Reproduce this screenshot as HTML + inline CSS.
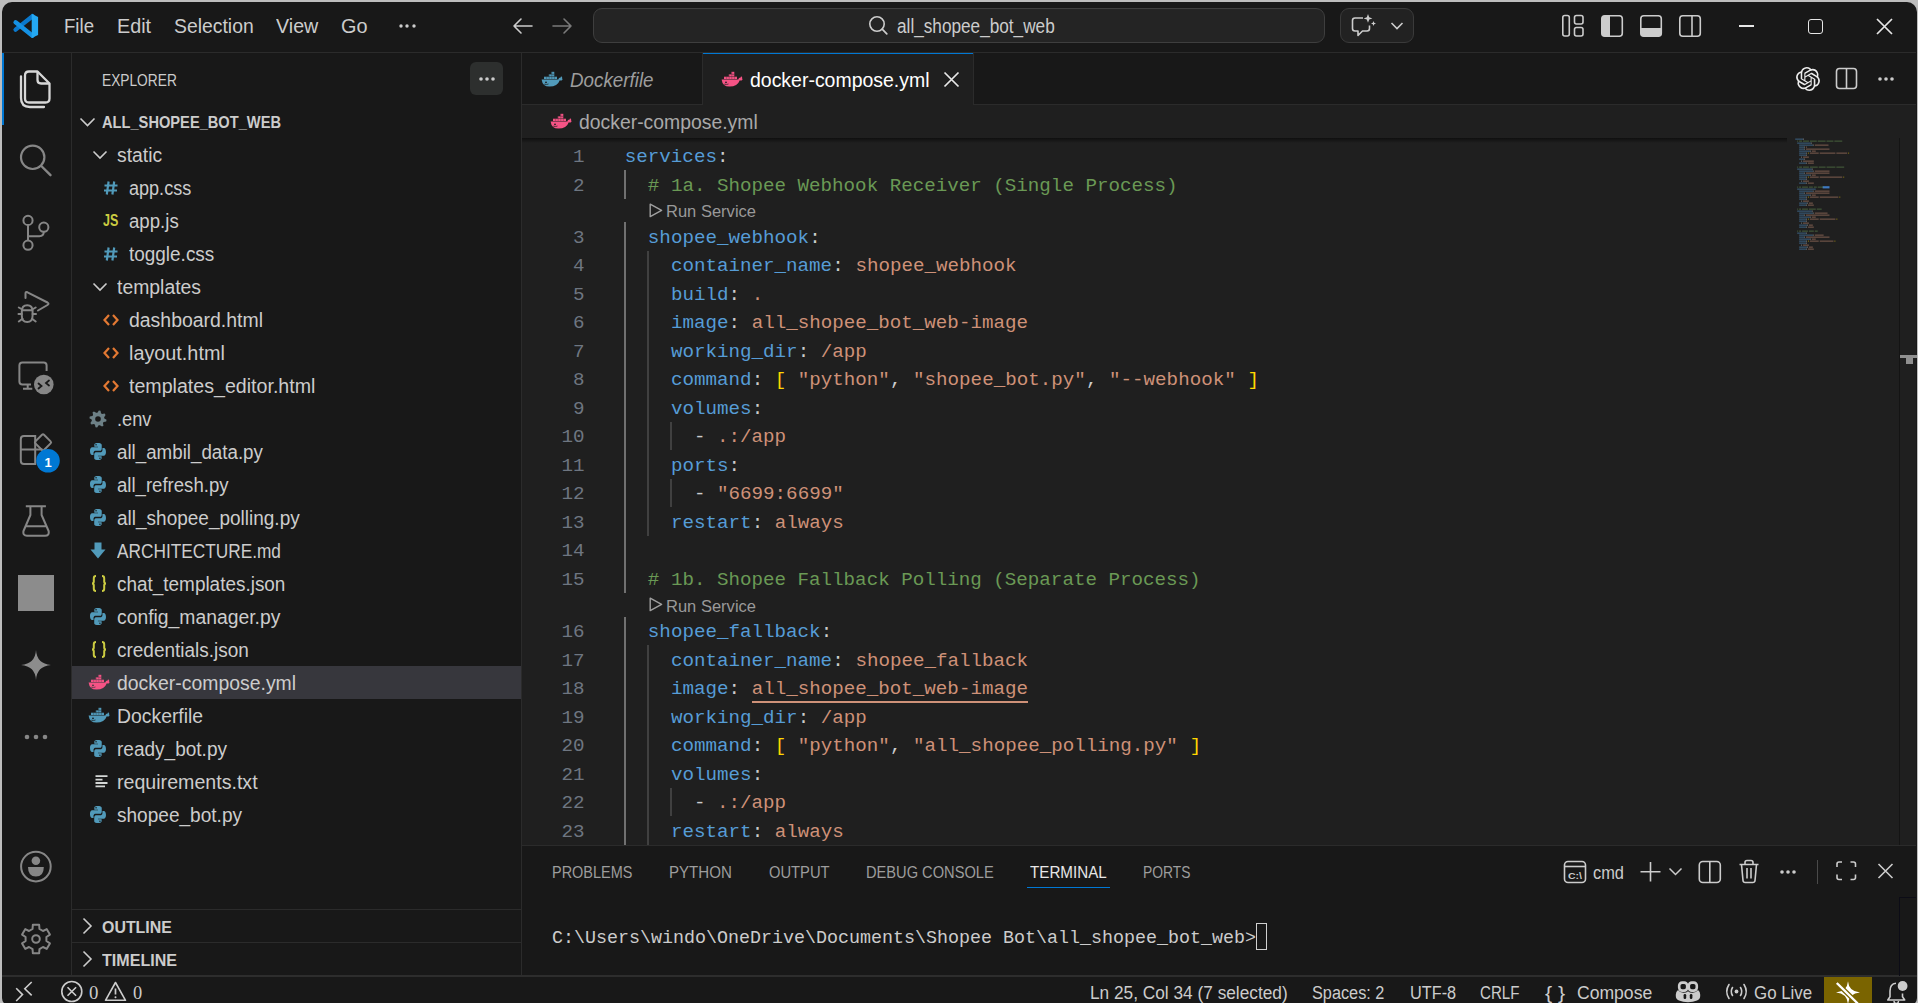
<!DOCTYPE html>
<html><head><meta charset="utf-8"><title>VS Code</title>
<style>
*{box-sizing:border-box;margin:0;padding:0}
html,body{width:1918px;height:1003px;overflow:hidden;background:#bdbdbd}
.a{position:absolute}
#win{position:absolute;left:0;top:0;width:1918px;height:1006px;background:#181818;clip-path:inset(2px 1px 0px 2px round 10px 10px 8px 8px);overflow:hidden}
.t{position:absolute;white-space:pre;line-height:1;transform-origin:0 0}
svg.a{overflow:visible}
</style></head><body><div id="win">
<div class="a" style="left:2px;top:52px;width:1914px;height:1px;background:#2b2b2b;"></div>
<div class="a" style="left:522px;top:105px;width:1394px;height:740px;background:#1f1f1f;"></div>
<div class="a" style="left:71px;top:53px;width:1px;height:923px;background:#2b2b2b;"></div>
<div class="a" style="left:521px;top:53px;width:1px;height:923px;background:#2b2b2b;"></div>
<div class="a" style="left:522px;top:104px;width:1394px;height:1px;background:#2b2b2b;"></div>
<div class="a" style="left:522px;top:845px;width:1394px;height:1px;background:#2b2b2b;"></div>
<div class="a" style="left:2px;top:975px;width:1915px;height:2px;background:#2d2d2d;"></div>
<div class="a" style="left:72px;top:909px;width:449px;height:1px;background:#2b2b2b;"></div>
<div class="a" style="left:72px;top:942px;width:449px;height:1px;background:#2b2b2b;"></div>
<svg class="a" style="left:13px;top:13px" width="26" height="26" viewBox="0 0 26 26" >
<path d="M19.5 3.2 L2.6 16.6" stroke="#0a78cc" stroke-width="4.4" stroke-linecap="round"/>
<path d="M2.6 9.3 L19.5 22.7" stroke="#1591e4" stroke-width="4.4" stroke-linecap="round"/>
<path d="M18.7 0.8 L25.1 3.9 V22 L18.7 25.1 Z" fill="#24a8f2"/>
</svg>
<div class="t" style="left:63.7px;top:17.47px;font-family:'Liberation Sans';font-size:19.5px;color:#cccccc;font-weight:400;font-style:normal;transform:scaleX(0.9548);">File</div>
<div class="t" style="left:116.9px;top:17.47px;font-family:'Liberation Sans';font-size:19.5px;color:#cccccc;font-weight:400;font-style:normal;transform:scaleX(1.0148);">Edit</div>
<div class="t" style="left:173.5px;top:17.47px;font-family:'Liberation Sans';font-size:19.5px;color:#cccccc;font-weight:400;font-style:normal;transform:scaleX(0.9935);">Selection</div>
<div class="t" style="left:276px;top:17.47px;font-family:'Liberation Sans';font-size:19.5px;color:#cccccc;font-weight:400;font-style:normal;transform:scaleX(1.0092);">View</div>
<div class="t" style="left:340.6px;top:17.47px;font-family:'Liberation Sans';font-size:19.5px;color:#cccccc;font-weight:400;font-style:normal;transform:scaleX(1.0187);">Go</div>
<svg class="a" style="left:398.5px;top:24px" width="4" height="4" viewBox="0 0 4 4" ><circle cx="2" cy="2" r="1.7" fill="#cccccc"/></svg>
<svg class="a" style="left:405px;top:24px" width="4" height="4" viewBox="0 0 4 4" ><circle cx="2" cy="2" r="1.7" fill="#cccccc"/></svg>
<svg class="a" style="left:411.5px;top:24px" width="4" height="4" viewBox="0 0 4 4" ><circle cx="2" cy="2" r="1.7" fill="#cccccc"/></svg>
<svg class="a" style="left:512px;top:17px" width="22" height="18" viewBox="0 0 22 18" ><path d="M2 9 H20 M9 2 L2 9 L9 16" stroke="#cccccc" stroke-width="1.6" fill="none" stroke-linecap="round" stroke-linejoin="round"/></svg>
<svg class="a" style="left:551px;top:17px" width="22" height="18" viewBox="0 0 22 18" ><path d="M2 9 H20 M13 2 L20 9 L13 16" stroke="#7a7a7a" stroke-width="1.6" fill="none" stroke-linecap="round" stroke-linejoin="round"/></svg>
<div class="a" style="left:593px;top:8px;width:732px;height:35px;background:#242424;border:1px solid #3e3e3e;border-radius:9px"></div>
<svg class="a" style="left:867px;top:15px" width="22" height="22" viewBox="0 0 22 22" ><circle cx="10" cy="9" r="7.2" stroke="#cccccc" stroke-width="1.6" fill="none"/><path d="M15.2 14.2 L19.8 18.8" stroke="#cccccc" stroke-width="1.7" stroke-linecap="round"/></svg>
<div class="t" style="left:896.6px;top:16.97px;font-family:'Liberation Sans';font-size:19.5px;color:#cccccc;font-weight:400;font-style:normal;transform:scaleX(0.8815);">all_shopee_bot_web</div>
<div class="a" style="left:1340px;top:8px;width:74px;height:35px;background:#222222;border:1px solid #3a3a3a;border-radius:9px"></div>
<svg class="a" style="left:1350px;top:13px" width="34" height="26" viewBox="0 0 34 26" ><path d="M13 5 H5 Q2.5 5 2.5 7.5 V15.5 Q2.5 18 5 18 H8 V22.5 L12.5 18 H17 Q19.5 18 19.5 15.5 V12.5" stroke="#cccccc" stroke-width="1.6" fill="none" stroke-linejoin="round"/>
<path d="M18 1 L19.2 4.2 L22.4 5.4 L19.2 6.6 L18 9.8 L16.8 6.6 L13.6 5.4 L16.8 4.2 Z" fill="#cccccc"/>
<path d="M23.5 8 L24.2 9.8 L26 10.5 L24.2 11.2 L23.5 13 L22.8 11.2 L21 10.5 L22.8 9.8 Z" fill="#cccccc"/></svg>
<svg class="a" style="left:1390px;top:21px" width="14" height="10" viewBox="0 0 14 10" ><path d="M1.5 2 L7 7.5 L12.5 2" stroke="#cccccc" stroke-width="1.6" fill="none"/></svg>
<svg class="a" style="left:1561px;top:14px" width="25" height="24" viewBox="0 0 25 24" ><rect x="1.8" y="1.5" width="6.5" height="20.5" rx="2" stroke="#cccccc" stroke-width="1.6" fill="none"/><rect x="13.5" y="1.5" width="8.5" height="8.5" rx="2" stroke="#cccccc" stroke-width="1.6" fill="none"/><rect x="13.5" y="13.5" width="8.5" height="8.5" rx="2" stroke="#cccccc" stroke-width="1.6" fill="none"/></svg>
<svg class="a" style="left:1600px;top:14px" width="25" height="24" viewBox="0 0 25 24" ><rect x="1.8" y="1.8" width="20.5" height="20.5" rx="3" stroke="#cccccc" stroke-width="1.6" fill="none"/><path d="M4 1.8 H10 V22.2 H4 Q1.8 22.2 1.8 20 V4 Q1.8 1.8 4 1.8Z" fill="#cccccc"/></svg>
<svg class="a" style="left:1639px;top:14px" width="25" height="24" viewBox="0 0 25 24" ><rect x="1.8" y="1.8" width="20.5" height="20.5" rx="3" stroke="#cccccc" stroke-width="1.6" fill="none"/><path d="M1.8 14 H22.2 V20 Q22.2 22.2 20 22.2 H4 Q1.8 22.2 1.8 20Z" fill="#cccccc"/></svg>
<svg class="a" style="left:1678px;top:14px" width="25" height="24" viewBox="0 0 25 24" ><rect x="1.8" y="1.8" width="20.5" height="20.5" rx="3" stroke="#cccccc" stroke-width="1.6" fill="none"/><path d="M14 1.8 V22.2" stroke="#cccccc" stroke-width="1.6"/></svg>
<div class="a" style="left:1739px;top:25.2px;width:15px;height:1.7px;background:#e6e6e6;"></div>
<div class="a" style="left:1808px;top:18.8px;width:15px;height:15px;border:1.8px solid #e6e6e6;border-radius:3px"></div>
<svg class="a" style="left:1876px;top:18px" width="17" height="17" viewBox="0 0 17 17" ><path d="M1 1 L16 16 M16 1 L1 16" stroke="#e6e6e6" stroke-width="1.7"/></svg>
<div class="a" style="left:2px;top:53px;width:1.6px;height:72px;background:#0078d4;"></div>
<svg class="a" style="left:18px;top:68px" width="36" height="42" viewBox="0 0 36 42" ><path d="M11 3.5 H19.5 L31.5 15.5 V30.5 Q31.5 34.5 27.5 34.5 H11 Q7 34.5 7 30.5 V7.5 Q7 3.5 11 3.5 Z" stroke="#d7d7d7" stroke-width="2.3" fill="none" stroke-linejoin="round"/>
<path d="M19.5 3.5 V12 Q19.5 15.5 23 15.5 H31.5" stroke="#d7d7d7" stroke-width="2.3" fill="none"/>
<path d="M3 8.5 V30 Q3 39 12 39 H26" stroke="#d7d7d7" stroke-width="2.3" fill="none" stroke-linecap="round"/></svg>
<svg class="a" style="left:14px;top:138px" width="44" height="44" viewBox="0 0 44 44" ><circle cx="18.7" cy="19.3" r="11.7" stroke="#868686" stroke-width="2.2" fill="none"/><path d="M27.3 28 L36.5 37.2" stroke="#868686" stroke-width="2.4" stroke-linecap="round"/></svg>
<svg class="a" style="left:14px;top:208px" width="44" height="44" viewBox="0 0 44 44" ><circle cx="14" cy="12.4" r="4.6" stroke="#868686" stroke-width="2" fill="none"/>
<circle cx="29.8" cy="19.2" r="4.6" stroke="#868686" stroke-width="2" fill="none"/>
<circle cx="14" cy="37.2" r="4.6" stroke="#868686" stroke-width="2" fill="none"/>
<path d="M14 17 V32.6 M29.8 23.8 Q29.8 28.2 25.4 28.2 H14" stroke="#868686" stroke-width="2" fill="none"/></svg>
<svg class="a" style="left:14px;top:284px" width="44" height="44" viewBox="0 0 44 44" ><path d="M11.5 14 V9.5 Q11.5 7.5 13.5 8.3 L33.5 18.5 Q35.5 19.8 33.5 21 L24 26.5" stroke="#868686" stroke-width="2" fill="none" stroke-linejoin="round" stroke-linecap="round"/>
<path d="M7.8 27.5 Q7.8 21.3 13.2 21.3 Q18.6 21.3 18.6 27.5 V31.5 Q18.6 38 13.2 38 Q7.8 38 7.8 31.5 Z" stroke="#868686" stroke-width="2" fill="none"/>
<path d="M4.5 30 H7.8 M18.6 30 H22 M4.8 23.5 L8.3 25.5 M21.7 23.5 L18.2 25.5 M4.8 37.5 L8.5 34.8 M21.7 37.5 L18 34.8 M8 26.3 H18.4" stroke="#868686" stroke-width="2" stroke-linecap="round"/></svg>
<svg class="a" style="left:14px;top:352px" width="44" height="44" viewBox="0 0 44 44" ><path d="M32.6 19 V13.5 Q32.6 10.5 29.6 10.5 H8.4 Q5.4 10.5 5.4 13.5 V29.5 Q5.4 32.5 8.4 32.5 H17" stroke="#868686" stroke-width="2" fill="none"/>
<path d="M9 36.8 H18.3 M13.7 33 V36.8" stroke="#868686" stroke-width="2"/>
<circle cx="29.8" cy="32.5" r="9.8" fill="#868686"/>
<path d="M24.5 31.5 L27.5 34 L24.5 36.5 M35 28.5 L32 31 L35 33.5" stroke="#181818" stroke-width="1.8" fill="none" stroke-linecap="round"/></svg>
<svg class="a" style="left:14px;top:420px" width="44" height="50" viewBox="0 0 44 50" ><path d="M10 16 H21.2 V44 H10 Q6.8 44 6.8 40.8 V19.2 Q6.8 16 10 16 Z M6.8 29.6 H21.2 M21.2 29.6 H28.5" stroke="#868686" stroke-width="2" fill="none"/>
<path d="M30 14.8 L36.6 21.4 Q37.6 22.4 36.6 23.4 L30 30 Q29 31 28 30 L21.4 23.4 Q20.4 22.4 21.4 21.4 L28 14.8 Q29 13.8 30 14.8 Z" stroke="#868686" stroke-width="2" fill="none"/>
<circle cx="34" cy="40.8" r="11.8" fill="#0078d4"/></svg>
<div class="t" style="left:44.6px;top:456.45px;font-family:'Liberation Sans';font-size:13px;color:#ffffff;font-weight:700;font-style:normal;">1</div>
<svg class="a" style="left:14px;top:498px" width="44" height="44" viewBox="0 0 44 44" ><path d="M11.8 8.3 H31.9 M16.4 8.3 V17 L9.5 33 Q8.6 37.7 13 37.7 H31 Q35.5 37.7 34.6 33 L27.6 17 V8.3 M12.2 28.3 H31.8" stroke="#868686" stroke-width="2" fill="none" stroke-linejoin="round"/></svg>
<div class="a" style="left:18px;top:575px;width:36px;height:36px;background:#8c8c8c;"></div>
<svg class="a" style="left:20px;top:649px" width="32" height="32" viewBox="0 0 32 32" ><path d="M16 1 Q16.8 14.8 31 16 Q16.8 17.2 16 31 Q15.2 17.2 1 16 Q15.2 14.8 16 1 Z" fill="#8c8c8c"/></svg>
<svg class="a" style="left:23.9px;top:734px" width="6" height="6" viewBox="0 0 6 6" ><circle cx="3" cy="3" r="2.3" fill="#868686"/></svg>
<svg class="a" style="left:33px;top:734px" width="6" height="6" viewBox="0 0 6 6" ><circle cx="3" cy="3" r="2.3" fill="#868686"/></svg>
<svg class="a" style="left:41.8px;top:734px" width="6" height="6" viewBox="0 0 6 6" ><circle cx="3" cy="3" r="2.3" fill="#868686"/></svg>
<svg class="a" style="left:14px;top:844px" width="44" height="44" viewBox="0 0 44 44" ><circle cx="21.9" cy="22.6" r="14.8" stroke="#868686" stroke-width="2" fill="none"/>
<circle cx="21.9" cy="16.8" r="4.3" fill="#868686"/>
<path d="M14 23 H29.8 Q29.8 32.6 21.9 32.6 Q14 32.6 14 23 Z" fill="#868686"/></svg>
<svg class="a" style="left:14px;top:916.6px" width="44" height="44" viewBox="0 0 44 44" ><path d="M18.55 11.98 L18.84 7.75 L25.16 7.75 L25.45 11.98 L28.95 14.00 L32.76 12.14 L35.92 17.61 L32.41 19.98 L32.41 24.02 L35.92 26.39 L32.76 31.86 L28.95 30.00 L25.45 32.02 L25.16 36.25 L18.84 36.25 L18.55 32.02 L15.05 30.00 L11.24 31.86 L8.08 26.39 L11.59 24.02 L11.59 19.98 L8.08 17.61 L11.24 12.14 L15.05 14.00 Z" stroke="#868686" stroke-width="2" fill="none" stroke-linejoin="round"/><circle cx="22" cy="22" r="3.8" stroke="#868686" stroke-width="2" fill="none"/></svg>
<div class="t" style="left:102.3px;top:72.26px;font-family:'Liberation Sans';font-size:16.5px;color:#cccccc;font-weight:400;font-style:normal;transform:scaleX(0.8324);">EXPLORER</div>
<div class="a" style="left:470px;top:62px;width:33px;height:33px;background:#2d2f2e;border-radius:6px"></div>
<svg class="a" style="left:478.5px;top:76.5px" width="4" height="4" viewBox="0 0 4 4" ><circle cx="2" cy="2" r="1.8" fill="#cccccc"/></svg>
<svg class="a" style="left:484.5px;top:76.5px" width="4" height="4" viewBox="0 0 4 4" ><circle cx="2" cy="2" r="1.8" fill="#cccccc"/></svg>
<svg class="a" style="left:490.5px;top:76.5px" width="4" height="4" viewBox="0 0 4 4" ><circle cx="2" cy="2" r="1.8" fill="#cccccc"/></svg>
<svg class="a" style="left:78px;top:114px" width="20" height="16" viewBox="0 0 20 16" ><path d="M2.5 4.5 L9.5 11.5 L16.5 4.5" stroke="#cccccc" stroke-width="1.6" fill="none"/></svg>
<div class="t" style="left:102px;top:114.06px;font-family:'Liberation Sans';font-size:16.5px;color:#cccccc;font-weight:700;font-style:normal;transform:scaleX(0.8875);">ALL_SHOPEE_BOT_WEB</div>
<div class="a" style="left:72px;top:666px;width:449px;height:33px;background:#37373d;"></div>
<div class="t" style="left:117.3px;top:146.47px;font-family:'Liberation Sans';font-size:19.5px;color:#cccccc;font-weight:400;font-style:normal;transform:scaleX(0.9909);">static</div>
<svg class="a" style="left:91px;top:146.5px" width="18" height="16" viewBox="0 0 18 16" ><path d="M2.5 4.5 L9 11 L15.5 4.5" stroke="#cccccc" stroke-width="1.6" fill="none"/></svg>
<div class="t" style="left:129.2px;top:179.47px;font-family:'Liberation Sans';font-size:19.5px;color:#cccccc;font-weight:400;font-style:normal;transform:scaleX(0.9256);">app.css</div>
<svg class="a" style="left:103px;top:179.5px" width="16" height="16" viewBox="0 0 16 16" ><path d="M5.6 1.5 L3.8 14.5 M11.2 1.5 L9.4 14.5 M1.5 5.5 H14.5 M1 10.5 H14" stroke="#519aba" stroke-width="2.2"/></svg>
<div class="t" style="left:129.2px;top:212.47px;font-family:'Liberation Sans';font-size:19.5px;color:#cccccc;font-weight:400;font-style:normal;transform:scaleX(0.9551);">app.js</div>
<div class="t" style="left:102.8px;top:212.56px;font-family:'Liberation Sans';font-size:16px;color:#cbcb41;font-weight:700;font-style:normal;transform:scaleX(0.7818);">JS</div>
<div class="t" style="left:129.2px;top:245.47px;font-family:'Liberation Sans';font-size:19.5px;color:#cccccc;font-weight:400;font-style:normal;transform:scaleX(0.9716);">toggle.css</div>
<svg class="a" style="left:103px;top:245.5px" width="16" height="16" viewBox="0 0 16 16" ><path d="M5.6 1.5 L3.8 14.5 M11.2 1.5 L9.4 14.5 M1.5 5.5 H14.5 M1 10.5 H14" stroke="#519aba" stroke-width="2.2"/></svg>
<div class="t" style="left:117.3px;top:278.47px;font-family:'Liberation Sans';font-size:19.5px;color:#cccccc;font-weight:400;font-style:normal;transform:scaleX(0.9936);">templates</div>
<svg class="a" style="left:91px;top:278.5px" width="18" height="16" viewBox="0 0 18 16" ><path d="M2.5 4.5 L9 11 L15.5 4.5" stroke="#cccccc" stroke-width="1.6" fill="none"/></svg>
<div class="t" style="left:129.2px;top:311.47px;font-family:'Liberation Sans';font-size:19.5px;color:#cccccc;font-weight:400;font-style:normal;transform:scaleX(0.9969);">dashboard.html</div>
<svg class="a" style="left:103px;top:311.5px" width="16" height="16" viewBox="0 0 16 16" ><path d="M6 3 L1.5 8 L6 13 M10 3 L14.5 8 L10 13" stroke="#e37933" stroke-width="2.2" fill="none"/></svg>
<div class="t" style="left:129.2px;top:344.47px;font-family:'Liberation Sans';font-size:19.5px;color:#cccccc;font-weight:400;font-style:normal;transform:scaleX(1.0160);">layout.html</div>
<svg class="a" style="left:103px;top:344.5px" width="16" height="16" viewBox="0 0 16 16" ><path d="M6 3 L1.5 8 L6 13 M10 3 L14.5 8 L10 13" stroke="#e37933" stroke-width="2.2" fill="none"/></svg>
<div class="t" style="left:129.2px;top:377.47px;font-family:'Liberation Sans';font-size:19.5px;color:#cccccc;font-weight:400;font-style:normal;transform:scaleX(1.0057);">templates_editor.html</div>
<svg class="a" style="left:103px;top:377.5px" width="16" height="16" viewBox="0 0 16 16" ><path d="M6 3 L1.5 8 L6 13 M10 3 L14.5 8 L10 13" stroke="#e37933" stroke-width="2.2" fill="none"/></svg>
<div class="t" style="left:117.3px;top:410.47px;font-family:'Liberation Sans';font-size:19.5px;color:#cccccc;font-weight:400;font-style:normal;transform:scaleX(0.9333);">.env</div>
<svg class="a" style="left:89.4px;top:409.5px" width="18" height="18" viewBox="0 0 18 18" ><path d="M17.56 9.86 L17.23 11.51 L14.64 12.03 L13.94 13.07 L14.44 15.66 L13.04 16.59 L10.85 15.13 L9.62 15.37 L8.14 17.56 L6.49 17.23 L5.97 14.64 L4.93 13.94 L2.34 14.44 L1.41 13.04 L2.87 10.85 L2.63 9.62 L0.44 8.14 L0.77 6.49 L3.36 5.97 L4.06 4.93 L3.56 2.34 L4.96 1.41 L7.15 2.87 L8.38 2.63 L9.86 0.44 L11.51 0.77 L12.03 3.36 L13.07 4.06 L15.66 3.56 L16.59 4.96 L15.13 7.15 L15.37 8.38 Z" fill="#6d8086"/><circle cx="9" cy="9" r="2.8" fill="#181818"/></svg>
<div class="t" style="left:117.3px;top:443.47px;font-family:'Liberation Sans';font-size:19.5px;color:#cccccc;font-weight:400;font-style:normal;transform:scaleX(0.9614);">all_ambil_data.py</div>
<svg class="a" style="left:90.4px;top:443.0px" width="16" height="17" viewBox="0 0 16 17" ><g transform="translate(-1.14,-0.69) scale(1.14,1.15)"><path d="M7.9 0.6 C4.6 0.6 4.8 2.1 4.8 2.1 V3.8 H8 V4.3 H3.3 C3.3 4.3 1 4 1 7.6 C1 11.2 3 11.1 3 11.1 H4.1 V9.4 C4.1 9.4 4 7.4 6.1 7.4 H9.4 C9.4 7.4 11.3 7.5 11.3 5.5 V2.4 C11.3 2.4 11.6 0.6 7.9 0.6 Z" fill="#519aba"/><path d="M7.9 0.6 C4.6 0.6 4.8 2.1 4.8 2.1 V3.8 H8 V4.3 H3.3 C3.3 4.3 1 4 1 7.6 C1 11.2 3 11.1 3 11.1 H4.1 V9.4 C4.1 9.4 4 7.4 6.1 7.4 H9.4 C9.4 7.4 11.3 7.5 11.3 5.5 V2.4 C11.3 2.4 11.6 0.6 7.9 0.6 Z" fill="#519aba" transform="rotate(180 8 8)"/><circle cx="6.3" cy="2.1" r="0.65" fill="#181818"/><circle cx="9.7" cy="13.9" r="0.65" fill="#181818"/></g></svg>
<div class="t" style="left:117.3px;top:476.47px;font-family:'Liberation Sans';font-size:19.5px;color:#cccccc;font-weight:400;font-style:normal;transform:scaleX(0.9525);">all_refresh.py</div>
<svg class="a" style="left:90.4px;top:476.0px" width="16" height="17" viewBox="0 0 16 17" ><g transform="translate(-1.14,-0.69) scale(1.14,1.15)"><path d="M7.9 0.6 C4.6 0.6 4.8 2.1 4.8 2.1 V3.8 H8 V4.3 H3.3 C3.3 4.3 1 4 1 7.6 C1 11.2 3 11.1 3 11.1 H4.1 V9.4 C4.1 9.4 4 7.4 6.1 7.4 H9.4 C9.4 7.4 11.3 7.5 11.3 5.5 V2.4 C11.3 2.4 11.6 0.6 7.9 0.6 Z" fill="#519aba"/><path d="M7.9 0.6 C4.6 0.6 4.8 2.1 4.8 2.1 V3.8 H8 V4.3 H3.3 C3.3 4.3 1 4 1 7.6 C1 11.2 3 11.1 3 11.1 H4.1 V9.4 C4.1 9.4 4 7.4 6.1 7.4 H9.4 C9.4 7.4 11.3 7.5 11.3 5.5 V2.4 C11.3 2.4 11.6 0.6 7.9 0.6 Z" fill="#519aba" transform="rotate(180 8 8)"/><circle cx="6.3" cy="2.1" r="0.65" fill="#181818"/><circle cx="9.7" cy="13.9" r="0.65" fill="#181818"/></g></svg>
<div class="t" style="left:117.3px;top:509.47px;font-family:'Liberation Sans';font-size:19.5px;color:#cccccc;font-weight:400;font-style:normal;transform:scaleX(0.9741);">all_shopee_polling.py</div>
<svg class="a" style="left:90.4px;top:509.0px" width="16" height="17" viewBox="0 0 16 17" ><g transform="translate(-1.14,-0.69) scale(1.14,1.15)"><path d="M7.9 0.6 C4.6 0.6 4.8 2.1 4.8 2.1 V3.8 H8 V4.3 H3.3 C3.3 4.3 1 4 1 7.6 C1 11.2 3 11.1 3 11.1 H4.1 V9.4 C4.1 9.4 4 7.4 6.1 7.4 H9.4 C9.4 7.4 11.3 7.5 11.3 5.5 V2.4 C11.3 2.4 11.6 0.6 7.9 0.6 Z" fill="#519aba"/><path d="M7.9 0.6 C4.6 0.6 4.8 2.1 4.8 2.1 V3.8 H8 V4.3 H3.3 C3.3 4.3 1 4 1 7.6 C1 11.2 3 11.1 3 11.1 H4.1 V9.4 C4.1 9.4 4 7.4 6.1 7.4 H9.4 C9.4 7.4 11.3 7.5 11.3 5.5 V2.4 C11.3 2.4 11.6 0.6 7.9 0.6 Z" fill="#519aba" transform="rotate(180 8 8)"/><circle cx="6.3" cy="2.1" r="0.65" fill="#181818"/><circle cx="9.7" cy="13.9" r="0.65" fill="#181818"/></g></svg>
<div class="t" style="left:117.3px;top:542.47px;font-family:'Liberation Sans';font-size:19.5px;color:#cccccc;font-weight:400;font-style:normal;transform:scaleX(0.8847);">ARCHITECTURE.md</div>
<svg class="a" style="left:90.4px;top:542.0px" width="16" height="17" viewBox="0 0 16 17" ><path d="M4.5 0.5 H11.5 V7.5 H15.5 L8 16.5 L0.5 7.5 H4.5 Z" fill="#519aba"/></svg>
<div class="t" style="left:117.3px;top:575.47px;font-family:'Liberation Sans';font-size:19.5px;color:#cccccc;font-weight:400;font-style:normal;transform:scaleX(0.9710);">chat_templates.json</div>
<svg class="a" style="left:90.6px;top:575.0px" width="16" height="17" viewBox="0 0 16 17" ><path d="M5 1 Q2.8 1 2.8 3.2 V6.5 Q2.8 8.5 1 8.5 Q2.8 8.5 2.8 10.5 V13.8 Q2.8 16 5 16 M11 1 Q13.2 1 13.2 3.2 V6.5 Q13.2 8.5 15 8.5 Q13.2 8.5 13.2 10.5 V13.8 Q13.2 16 11 16" stroke="#cbcb41" stroke-width="2" fill="none"/></svg>
<div class="t" style="left:117.3px;top:608.47px;font-family:'Liberation Sans';font-size:19.5px;color:#cccccc;font-weight:400;font-style:normal;transform:scaleX(0.9910);">config_manager.py</div>
<svg class="a" style="left:90.4px;top:608.0px" width="16" height="17" viewBox="0 0 16 17" ><g transform="translate(-1.14,-0.69) scale(1.14,1.15)"><path d="M7.9 0.6 C4.6 0.6 4.8 2.1 4.8 2.1 V3.8 H8 V4.3 H3.3 C3.3 4.3 1 4 1 7.6 C1 11.2 3 11.1 3 11.1 H4.1 V9.4 C4.1 9.4 4 7.4 6.1 7.4 H9.4 C9.4 7.4 11.3 7.5 11.3 5.5 V2.4 C11.3 2.4 11.6 0.6 7.9 0.6 Z" fill="#519aba"/><path d="M7.9 0.6 C4.6 0.6 4.8 2.1 4.8 2.1 V3.8 H8 V4.3 H3.3 C3.3 4.3 1 4 1 7.6 C1 11.2 3 11.1 3 11.1 H4.1 V9.4 C4.1 9.4 4 7.4 6.1 7.4 H9.4 C9.4 7.4 11.3 7.5 11.3 5.5 V2.4 C11.3 2.4 11.6 0.6 7.9 0.6 Z" fill="#519aba" transform="rotate(180 8 8)"/><circle cx="6.3" cy="2.1" r="0.65" fill="#181818"/><circle cx="9.7" cy="13.9" r="0.65" fill="#181818"/></g></svg>
<div class="t" style="left:117.3px;top:641.47px;font-family:'Liberation Sans';font-size:19.5px;color:#cccccc;font-weight:400;font-style:normal;transform:scaleX(0.9735);">credentials.json</div>
<svg class="a" style="left:90.6px;top:641.0px" width="16" height="17" viewBox="0 0 16 17" ><path d="M5 1 Q2.8 1 2.8 3.2 V6.5 Q2.8 8.5 1 8.5 Q2.8 8.5 2.8 10.5 V13.8 Q2.8 16 5 16 M11 1 Q13.2 1 13.2 3.2 V6.5 Q13.2 8.5 15 8.5 Q13.2 8.5 13.2 10.5 V13.8 Q13.2 16 11 16" stroke="#cbcb41" stroke-width="2" fill="none"/></svg>
<div class="t" style="left:117.3px;top:674.47px;font-family:'Liberation Sans';font-size:19.5px;color:#cccccc;font-weight:400;font-style:normal;transform:scaleX(0.9956);">docker-compose.yml</div>
<svg class="a" style="left:88px;top:675.5px" width="22" height="14" viewBox="0 0 22 14" ><path d="M0.6 6.4 H17.3 Q17.8 4.3 19.8 4.6 Q19.5 3.6 20.3 3.2 Q21.6 4.5 21.2 5.8 Q22 6.6 21 7.2 Q19.9 7.6 18.8 7.2 Q16.5 13.6 8.5 13.6 Q1.5 13.6 0.6 6.4 Z" fill="#f55385"/>
<rect x="3" y="3.6" width="13" height="2.4" fill="#f55385"/><rect x="7.8" y="1.2" width="5.6" height="2.4" fill="#f55385"/><rect x="10.4" y="-1.2" width="2.9" height="2.4" fill="#f55385"/>
<path d="M5.6 3.6 V6 M8.2 1.2 V6 M10.8 -1.2 V6 M13.4 1.2 V6 M3 3.6 H16 M7.8 1.2 H13.4" stroke="#37373d" stroke-width="0.5" opacity="0.55"/>
<circle cx="5" cy="9.3" r="0.9" fill="#37373d"/><path d="M3.2 11.2 Q5.5 12 7.5 11" stroke="#37373d" stroke-width="0.7" fill="none"/></svg>
<div class="t" style="left:117.3px;top:707.47px;font-family:'Liberation Sans';font-size:19.5px;color:#cccccc;font-weight:400;font-style:normal;transform:scaleX(0.9932);">Dockerfile</div>
<svg class="a" style="left:88px;top:708.5px" width="22" height="14" viewBox="0 0 22 14" ><path d="M0.6 6.4 H17.3 Q17.8 4.3 19.8 4.6 Q19.5 3.6 20.3 3.2 Q21.6 4.5 21.2 5.8 Q22 6.6 21 7.2 Q19.9 7.6 18.8 7.2 Q16.5 13.6 8.5 13.6 Q1.5 13.6 0.6 6.4 Z" fill="#519aba"/>
<rect x="3" y="3.6" width="13" height="2.4" fill="#519aba"/><rect x="7.8" y="1.2" width="5.6" height="2.4" fill="#519aba"/><rect x="10.4" y="-1.2" width="2.9" height="2.4" fill="#519aba"/>
<path d="M5.6 3.6 V6 M8.2 1.2 V6 M10.8 -1.2 V6 M13.4 1.2 V6 M3 3.6 H16 M7.8 1.2 H13.4" stroke="#181818" stroke-width="0.5" opacity="0.55"/>
<circle cx="5" cy="9.3" r="0.9" fill="#181818"/><path d="M3.2 11.2 Q5.5 12 7.5 11" stroke="#181818" stroke-width="0.7" fill="none"/></svg>
<div class="t" style="left:117.3px;top:740.47px;font-family:'Liberation Sans';font-size:19.5px;color:#cccccc;font-weight:400;font-style:normal;transform:scaleX(0.9757);">ready_bot.py</div>
<svg class="a" style="left:90.4px;top:740.0px" width="16" height="17" viewBox="0 0 16 17" ><g transform="translate(-1.14,-0.69) scale(1.14,1.15)"><path d="M7.9 0.6 C4.6 0.6 4.8 2.1 4.8 2.1 V3.8 H8 V4.3 H3.3 C3.3 4.3 1 4 1 7.6 C1 11.2 3 11.1 3 11.1 H4.1 V9.4 C4.1 9.4 4 7.4 6.1 7.4 H9.4 C9.4 7.4 11.3 7.5 11.3 5.5 V2.4 C11.3 2.4 11.6 0.6 7.9 0.6 Z" fill="#519aba"/><path d="M7.9 0.6 C4.6 0.6 4.8 2.1 4.8 2.1 V3.8 H8 V4.3 H3.3 C3.3 4.3 1 4 1 7.6 C1 11.2 3 11.1 3 11.1 H4.1 V9.4 C4.1 9.4 4 7.4 6.1 7.4 H9.4 C9.4 7.4 11.3 7.5 11.3 5.5 V2.4 C11.3 2.4 11.6 0.6 7.9 0.6 Z" fill="#519aba" transform="rotate(180 8 8)"/><circle cx="6.3" cy="2.1" r="0.65" fill="#181818"/><circle cx="9.7" cy="13.9" r="0.65" fill="#181818"/></g></svg>
<div class="t" style="left:117.3px;top:773.47px;font-family:'Liberation Sans';font-size:19.5px;color:#cccccc;font-weight:400;font-style:normal;transform:scaleX(1.0057);">requirements.txt</div>
<svg class="a" style="left:95px;top:774.5px" width="14" height="14" viewBox="0 0 14 14" ><path d="M0.5 1.2 H12.5 M0.5 4.6 H7.5 M0.5 8 H12.5 M0.5 11.4 H10" stroke="#d4d7d6" stroke-width="1.8"/></svg>
<div class="t" style="left:117.3px;top:806.47px;font-family:'Liberation Sans';font-size:19.5px;color:#cccccc;font-weight:400;font-style:normal;transform:scaleX(0.9770);">shopee_bot.py</div>
<svg class="a" style="left:90.4px;top:806.0px" width="16" height="17" viewBox="0 0 16 17" ><g transform="translate(-1.14,-0.69) scale(1.14,1.15)"><path d="M7.9 0.6 C4.6 0.6 4.8 2.1 4.8 2.1 V3.8 H8 V4.3 H3.3 C3.3 4.3 1 4 1 7.6 C1 11.2 3 11.1 3 11.1 H4.1 V9.4 C4.1 9.4 4 7.4 6.1 7.4 H9.4 C9.4 7.4 11.3 7.5 11.3 5.5 V2.4 C11.3 2.4 11.6 0.6 7.9 0.6 Z" fill="#519aba"/><path d="M7.9 0.6 C4.6 0.6 4.8 2.1 4.8 2.1 V3.8 H8 V4.3 H3.3 C3.3 4.3 1 4 1 7.6 C1 11.2 3 11.1 3 11.1 H4.1 V9.4 C4.1 9.4 4 7.4 6.1 7.4 H9.4 C9.4 7.4 11.3 7.5 11.3 5.5 V2.4 C11.3 2.4 11.6 0.6 7.9 0.6 Z" fill="#519aba" transform="rotate(180 8 8)"/><circle cx="6.3" cy="2.1" r="0.65" fill="#181818"/><circle cx="9.7" cy="13.9" r="0.65" fill="#181818"/></g></svg>
<svg class="a" style="left:80px;top:917px" width="14" height="18" viewBox="0 0 14 18" ><path d="M3.5 1.5 L11 9 L3.5 16.5" stroke="#cccccc" stroke-width="1.6" fill="none"/></svg>
<div class="t" style="left:102.1px;top:919.36px;font-family:'Liberation Sans';font-size:16.5px;color:#cccccc;font-weight:700;font-style:normal;transform:scaleX(0.9653);">OUTLINE</div>
<svg class="a" style="left:80px;top:950px" width="14" height="18" viewBox="0 0 14 18" ><path d="M3.5 1.5 L11 9 L3.5 16.5" stroke="#cccccc" stroke-width="1.6" fill="none"/></svg>
<div class="t" style="left:102.1px;top:952.26px;font-family:'Liberation Sans';font-size:16.5px;color:#cccccc;font-weight:700;font-style:normal;transform:scaleX(0.9741);">TIMELINE</div>
<div class="a" style="left:703px;top:53px;width:270px;height:52px;background:#1f1f1f;"></div>
<div class="a" style="left:703px;top:53px;width:270px;height:1px;background:#0078d4;"></div>
<div class="a" style="left:702px;top:53px;width:1px;height:51px;background:#2b2b2b;"></div>
<div class="a" style="left:973px;top:53px;width:1px;height:51px;background:#2b2b2b;"></div>
<svg class="a" style="left:540.6px;top:73px" width="22" height="14" viewBox="0 0 22 14" ><path d="M0.6 6.4 H17.3 Q17.8 4.3 19.8 4.6 Q19.5 3.6 20.3 3.2 Q21.6 4.5 21.2 5.8 Q22 6.6 21 7.2 Q19.9 7.6 18.8 7.2 Q16.5 13.6 8.5 13.6 Q1.5 13.6 0.6 6.4 Z" fill="#519aba"/>
<rect x="3" y="3.6" width="13" height="2.4" fill="#519aba"/><rect x="7.8" y="1.2" width="5.6" height="2.4" fill="#519aba"/><rect x="10.4" y="-1.2" width="2.9" height="2.4" fill="#519aba"/>
<path d="M5.6 3.6 V6 M8.2 1.2 V6 M10.8 -1.2 V6 M13.4 1.2 V6 M3 3.6 H16 M7.8 1.2 H13.4" stroke="#181818" stroke-width="0.5" opacity="0.55"/>
<circle cx="5" cy="9.3" r="0.9" fill="#181818"/><path d="M3.2 11.2 Q5.5 12 7.5 11" stroke="#181818" stroke-width="0.7" fill="none"/></svg>
<div class="t" style="left:570.4px;top:71.17px;font-family:'Liberation Sans';font-size:19.5px;color:#9d9d9d;font-weight:400;font-style:italic;transform:scaleX(0.9632);">Dockerfile</div>
<svg class="a" style="left:721px;top:73px" width="22" height="14" viewBox="0 0 22 14" ><path d="M0.6 6.4 H17.3 Q17.8 4.3 19.8 4.6 Q19.5 3.6 20.3 3.2 Q21.6 4.5 21.2 5.8 Q22 6.6 21 7.2 Q19.9 7.6 18.8 7.2 Q16.5 13.6 8.5 13.6 Q1.5 13.6 0.6 6.4 Z" fill="#f55385"/>
<rect x="3" y="3.6" width="13" height="2.4" fill="#f55385"/><rect x="7.8" y="1.2" width="5.6" height="2.4" fill="#f55385"/><rect x="10.4" y="-1.2" width="2.9" height="2.4" fill="#f55385"/>
<path d="M5.6 3.6 V6 M8.2 1.2 V6 M10.8 -1.2 V6 M13.4 1.2 V6 M3 3.6 H16 M7.8 1.2 H13.4" stroke="#1f1f1f" stroke-width="0.5" opacity="0.55"/>
<circle cx="5" cy="9.3" r="0.9" fill="#1f1f1f"/><path d="M3.2 11.2 Q5.5 12 7.5 11" stroke="#1f1f1f" stroke-width="0.7" fill="none"/></svg>
<div class="t" style="left:750.1px;top:71.17px;font-family:'Liberation Sans';font-size:19.5px;color:#ffffff;font-weight:400;font-style:normal;transform:scaleX(0.9978);">docker-compose.yml</div>
<svg class="a" style="left:943px;top:71px" width="17" height="17" viewBox="0 0 17 17" ><path d="M1.5 1.5 L15.5 15.5 M15.5 1.5 L1.5 15.5" stroke="#e8e8e8" stroke-width="1.7"/></svg>
<svg class="a" style="left:1796px;top:67px" width="24" height="24" viewBox="0 0 24 24" ><path fill="#ececec" d="M22.2819 9.8211a5.9847 5.9847 0 0 0-.5157-4.9108 6.0462 6.0462 0 0 0-6.5098-2.9A6.0651 6.0651 0 0 0 4.9807 4.1818a5.9847 5.9847 0 0 0-3.9977 2.9 6.0462 6.0462 0 0 0 .7427 7.0966 5.98 5.98 0 0 0 .511 4.9107 6.051 6.051 0 0 0 6.5146 2.9001A5.9847 5.9847 0 0 0 13.2599 24a6.0557 6.0557 0 0 0 5.7718-4.2058 5.9894 5.9894 0 0 0 3.9977-2.9001 6.0557 6.0557 0 0 0-.7475-7.0729zm-9.022 12.6081a4.4755 4.4755 0 0 1-2.8764-1.0408l.1419-.0804 4.7783-2.7582a.7948.7948 0 0 0 .3927-.6813v-6.7369l2.02 1.1686a.071.071 0 0 1 .038.052v5.5826a4.504 4.504 0 0 1-4.4945 4.4944zm-9.6607-4.1254a4.4708 4.4708 0 0 1-.5346-3.0137l.142.0852 4.783 2.7582a.7712.7712 0 0 0 .7806 0l5.8428-3.3685v2.3324a.0804.0804 0 0 1-.0332.0615L9.74 19.9502a4.4992 4.4992 0 0 1-6.1408-1.6464zM2.3408 7.8956a4.485 4.485 0 0 1 2.3655-1.9728V11.6a.7664.7664 0 0 0 .3879.6765l5.8144 3.3543-2.0201 1.1685a.0757.0757 0 0 1-.071 0l-4.8303-2.7865A4.504 4.504 0 0 1 2.3408 7.872zm16.5963 3.8558L13.1038 8.364 15.1192 7.2a.0757.0757 0 0 1 .071 0l4.8303 2.7913a4.4944 4.4944 0 0 1-.6765 8.1042v-5.6772a.79.79 0 0 0-.407-.667zm2.0107-3.0231l-.142-.0852-4.7735-2.7818a.7759.7759 0 0 0-.7854 0L9.409 9.2297V6.8974a.0662.0662 0 0 1 .0284-.0615l4.8303-2.7866a4.4992 4.4992 0 0 1 6.6802 4.66zM8.3065 12.863l-2.02-1.1638a.0804.0804 0 0 1-.038-.0567V6.0742a4.4992 4.4992 0 0 1 7.3757-3.4537l-.142.0805L8.704 5.459a.7948.7948 0 0 0-.3927.6813zm1.0976-2.3654l2.602-1.4998 2.6069 1.4998v2.9994l-2.5974 1.4997-2.6067-1.4997Z"/></svg>
<svg class="a" style="left:1835px;top:67px" width="23" height="23" viewBox="0 0 23 23" ><rect x="1.5" y="1.5" width="20" height="20" rx="3" stroke="#cccccc" stroke-width="1.6" fill="none"/><path d="M11.5 1.5 V21.5" stroke="#cccccc" stroke-width="1.6"/></svg>
<svg class="a" style="left:1877.5px;top:77px" width="4" height="4" viewBox="0 0 4 4" ><circle cx="2" cy="2" r="1.8" fill="#cccccc"/></svg>
<svg class="a" style="left:1883.5px;top:77px" width="4" height="4" viewBox="0 0 4 4" ><circle cx="2" cy="2" r="1.8" fill="#cccccc"/></svg>
<svg class="a" style="left:1889.5px;top:77px" width="4" height="4" viewBox="0 0 4 4" ><circle cx="2" cy="2" r="1.8" fill="#cccccc"/></svg>
<svg class="a" style="left:550px;top:115px" width="22" height="14" viewBox="0 0 22 14" ><path d="M0.6 6.4 H17.3 Q17.8 4.3 19.8 4.6 Q19.5 3.6 20.3 3.2 Q21.6 4.5 21.2 5.8 Q22 6.6 21 7.2 Q19.9 7.6 18.8 7.2 Q16.5 13.6 8.5 13.6 Q1.5 13.6 0.6 6.4 Z" fill="#f55385"/>
<rect x="3" y="3.6" width="13" height="2.4" fill="#f55385"/><rect x="7.8" y="1.2" width="5.6" height="2.4" fill="#f55385"/><rect x="10.4" y="-1.2" width="2.9" height="2.4" fill="#f55385"/>
<path d="M5.6 3.6 V6 M8.2 1.2 V6 M10.8 -1.2 V6 M13.4 1.2 V6 M3 3.6 H16 M7.8 1.2 H13.4" stroke="#1f1f1f" stroke-width="0.5" opacity="0.55"/>
<circle cx="5" cy="9.3" r="0.9" fill="#1f1f1f"/><path d="M3.2 11.2 Q5.5 12 7.5 11" stroke="#1f1f1f" stroke-width="0.7" fill="none"/></svg>
<div class="t" style="left:579.3px;top:112.97px;font-family:'Liberation Sans';font-size:19.5px;color:#a9a9a9;font-weight:400;font-style:normal;transform:scaleX(0.9934);">docker-compose.yml</div>
<div class="a" style="left:522px;top:138px;width:1265px;height:5px;background:linear-gradient(#0f0f0f,rgba(31,31,31,0))"></div>
<div class="t" style="left:572.97px;top:148.18px;font-family:'Liberation Mono';font-size:19.2px;color:#6e7681;font-weight:400;font-style:normal;">1</div>
<div class="t" style="left:624.8px;top:148.18px;font-family:'Liberation Mono';font-size:19.2px;color:#569cd6;font-weight:400;font-style:normal;">services</div>
<div class="t" style="left:717.04px;top:148.18px;font-family:'Liberation Mono';font-size:19.2px;color:#cccccc;font-weight:400;font-style:normal;">:</div>
<div class="t" style="left:572.97px;top:176.68px;font-family:'Liberation Mono';font-size:19.2px;color:#6e7681;font-weight:400;font-style:normal;">2</div>
<div class="t" style="left:647.8599999999999px;top:176.68px;font-family:'Liberation Mono';font-size:19.2px;color:#6a9955;font-weight:400;font-style:normal;"># 1a. Shopee Webhook Receiver (Single Process)</div>
<svg class="a" style="left:649.06px;top:202.5px" width="15" height="15" viewBox="0 0 15 15" ><path d="M1.2 1.2 L12.6 7.3 L1.2 13.6 Z" stroke="#a0a0a0" stroke-width="1.4" fill="none" stroke-linejoin="round"/></svg>
<div class="t" style="left:665.6599999999999px;top:203.26px;font-family:'Liberation Sans';font-size:17px;color:#999999;font-weight:400;font-style:normal;transform:scaleX(0.9720);">Run Service</div>
<div class="t" style="left:572.97px;top:228.98px;font-family:'Liberation Mono';font-size:19.2px;color:#6e7681;font-weight:400;font-style:normal;">3</div>
<div class="t" style="left:647.8599999999999px;top:228.98px;font-family:'Liberation Mono';font-size:19.2px;color:#569cd6;font-weight:400;font-style:normal;">shopee_webhook</div>
<div class="t" style="left:809.28px;top:228.98px;font-family:'Liberation Mono';font-size:19.2px;color:#cccccc;font-weight:400;font-style:normal;">:</div>
<div class="t" style="left:572.97px;top:257.48px;font-family:'Liberation Mono';font-size:19.2px;color:#6e7681;font-weight:400;font-style:normal;">4</div>
<div class="t" style="left:670.92px;top:257.48px;font-family:'Liberation Mono';font-size:19.2px;color:#569cd6;font-weight:400;font-style:normal;">container_name</div>
<div class="t" style="left:832.3399999999999px;top:257.48px;font-family:'Liberation Mono';font-size:19.2px;color:#cccccc;font-weight:400;font-style:normal;">:</div>
<div class="t" style="left:855.4px;top:257.48px;font-family:'Liberation Mono';font-size:19.2px;color:#ce9178;font-weight:400;font-style:normal;">shopee_webhook</div>
<div class="t" style="left:572.97px;top:285.98px;font-family:'Liberation Mono';font-size:19.2px;color:#6e7681;font-weight:400;font-style:normal;">5</div>
<div class="t" style="left:670.92px;top:285.98px;font-family:'Liberation Mono';font-size:19.2px;color:#569cd6;font-weight:400;font-style:normal;">build</div>
<div class="t" style="left:728.5699999999999px;top:285.98px;font-family:'Liberation Mono';font-size:19.2px;color:#cccccc;font-weight:400;font-style:normal;">:</div>
<div class="t" style="left:751.63px;top:285.98px;font-family:'Liberation Mono';font-size:19.2px;color:#ce9178;font-weight:400;font-style:normal;">.</div>
<div class="t" style="left:572.97px;top:314.48px;font-family:'Liberation Mono';font-size:19.2px;color:#6e7681;font-weight:400;font-style:normal;">6</div>
<div class="t" style="left:670.92px;top:314.48px;font-family:'Liberation Mono';font-size:19.2px;color:#569cd6;font-weight:400;font-style:normal;">image</div>
<div class="t" style="left:728.5699999999999px;top:314.48px;font-family:'Liberation Mono';font-size:19.2px;color:#cccccc;font-weight:400;font-style:normal;">:</div>
<div class="t" style="left:751.63px;top:314.48px;font-family:'Liberation Mono';font-size:19.2px;color:#ce9178;font-weight:400;font-style:normal;">all_shopee_bot_web-image</div>
<div class="t" style="left:572.97px;top:342.98px;font-family:'Liberation Mono';font-size:19.2px;color:#6e7681;font-weight:400;font-style:normal;">7</div>
<div class="t" style="left:670.92px;top:342.98px;font-family:'Liberation Mono';font-size:19.2px;color:#569cd6;font-weight:400;font-style:normal;">working_dir</div>
<div class="t" style="left:797.75px;top:342.98px;font-family:'Liberation Mono';font-size:19.2px;color:#cccccc;font-weight:400;font-style:normal;">:</div>
<div class="t" style="left:820.81px;top:342.98px;font-family:'Liberation Mono';font-size:19.2px;color:#ce9178;font-weight:400;font-style:normal;">/app</div>
<div class="t" style="left:572.97px;top:371.48px;font-family:'Liberation Mono';font-size:19.2px;color:#6e7681;font-weight:400;font-style:normal;">8</div>
<div class="t" style="left:670.92px;top:371.48px;font-family:'Liberation Mono';font-size:19.2px;color:#569cd6;font-weight:400;font-style:normal;">command</div>
<div class="t" style="left:751.63px;top:371.48px;font-family:'Liberation Mono';font-size:19.2px;color:#cccccc;font-weight:400;font-style:normal;">:</div>
<div class="t" style="left:774.6899999999999px;top:371.48px;font-family:'Liberation Mono';font-size:19.2px;color:#ffd700;font-weight:400;font-style:normal;">[</div>
<div class="t" style="left:797.75px;top:371.48px;font-family:'Liberation Mono';font-size:19.2px;color:#ce9178;font-weight:400;font-style:normal;">"python"</div>
<div class="t" style="left:889.99px;top:371.48px;font-family:'Liberation Mono';font-size:19.2px;color:#cccccc;font-weight:400;font-style:normal;">,</div>
<div class="t" style="left:913.05px;top:371.48px;font-family:'Liberation Mono';font-size:19.2px;color:#ce9178;font-weight:400;font-style:normal;">"shopee_bot.py"</div>
<div class="t" style="left:1086.0px;top:371.48px;font-family:'Liberation Mono';font-size:19.2px;color:#cccccc;font-weight:400;font-style:normal;">,</div>
<div class="t" style="left:1109.06px;top:371.48px;font-family:'Liberation Mono';font-size:19.2px;color:#ce9178;font-weight:400;font-style:normal;">"--webhook"</div>
<div class="t" style="left:1247.42px;top:371.48px;font-family:'Liberation Mono';font-size:19.2px;color:#ffd700;font-weight:400;font-style:normal;">]</div>
<div class="t" style="left:572.97px;top:399.98px;font-family:'Liberation Mono';font-size:19.2px;color:#6e7681;font-weight:400;font-style:normal;">9</div>
<div class="t" style="left:670.92px;top:399.98px;font-family:'Liberation Mono';font-size:19.2px;color:#569cd6;font-weight:400;font-style:normal;">volumes</div>
<div class="t" style="left:751.63px;top:399.98px;font-family:'Liberation Mono';font-size:19.2px;color:#cccccc;font-weight:400;font-style:normal;">:</div>
<div class="t" style="left:561.44px;top:428.48px;font-family:'Liberation Mono';font-size:19.2px;color:#6e7681;font-weight:400;font-style:normal;">10</div>
<div class="t" style="left:693.9799999999999px;top:428.48px;font-family:'Liberation Mono';font-size:19.2px;color:#cccccc;font-weight:400;font-style:normal;">-</div>
<div class="t" style="left:717.04px;top:428.48px;font-family:'Liberation Mono';font-size:19.2px;color:#ce9178;font-weight:400;font-style:normal;">.:/app</div>
<div class="t" style="left:561.44px;top:456.98px;font-family:'Liberation Mono';font-size:19.2px;color:#6e7681;font-weight:400;font-style:normal;">11</div>
<div class="t" style="left:670.92px;top:456.98px;font-family:'Liberation Mono';font-size:19.2px;color:#569cd6;font-weight:400;font-style:normal;">ports</div>
<div class="t" style="left:728.5699999999999px;top:456.98px;font-family:'Liberation Mono';font-size:19.2px;color:#cccccc;font-weight:400;font-style:normal;">:</div>
<div class="t" style="left:561.44px;top:485.48px;font-family:'Liberation Mono';font-size:19.2px;color:#6e7681;font-weight:400;font-style:normal;">12</div>
<div class="t" style="left:693.9799999999999px;top:485.48px;font-family:'Liberation Mono';font-size:19.2px;color:#cccccc;font-weight:400;font-style:normal;">-</div>
<div class="t" style="left:717.04px;top:485.48px;font-family:'Liberation Mono';font-size:19.2px;color:#ce9178;font-weight:400;font-style:normal;">"6699:6699"</div>
<div class="t" style="left:561.44px;top:513.98px;font-family:'Liberation Mono';font-size:19.2px;color:#6e7681;font-weight:400;font-style:normal;">13</div>
<div class="t" style="left:670.92px;top:513.98px;font-family:'Liberation Mono';font-size:19.2px;color:#569cd6;font-weight:400;font-style:normal;">restart</div>
<div class="t" style="left:751.63px;top:513.98px;font-family:'Liberation Mono';font-size:19.2px;color:#cccccc;font-weight:400;font-style:normal;">:</div>
<div class="t" style="left:774.6899999999999px;top:513.98px;font-family:'Liberation Mono';font-size:19.2px;color:#ce9178;font-weight:400;font-style:normal;">always</div>
<div class="t" style="left:561.44px;top:542.48px;font-family:'Liberation Mono';font-size:19.2px;color:#6e7681;font-weight:400;font-style:normal;">14</div>
<div class="t" style="left:561.44px;top:570.98px;font-family:'Liberation Mono';font-size:19.2px;color:#6e7681;font-weight:400;font-style:normal;">15</div>
<div class="t" style="left:647.8599999999999px;top:570.98px;font-family:'Liberation Mono';font-size:19.2px;color:#6a9955;font-weight:400;font-style:normal;"># 1b. Shopee Fallback Polling (Separate Process)</div>
<svg class="a" style="left:649.06px;top:596.8px" width="15" height="15" viewBox="0 0 15 15" ><path d="M1.2 1.2 L12.6 7.3 L1.2 13.6 Z" stroke="#a0a0a0" stroke-width="1.4" fill="none" stroke-linejoin="round"/></svg>
<div class="t" style="left:665.6599999999999px;top:597.56px;font-family:'Liberation Sans';font-size:17px;color:#999999;font-weight:400;font-style:normal;transform:scaleX(0.9720);">Run Service</div>
<div class="t" style="left:561.44px;top:623.28px;font-family:'Liberation Mono';font-size:19.2px;color:#6e7681;font-weight:400;font-style:normal;">16</div>
<div class="t" style="left:647.8599999999999px;top:623.28px;font-family:'Liberation Mono';font-size:19.2px;color:#569cd6;font-weight:400;font-style:normal;">shopee_fallback</div>
<div class="t" style="left:820.81px;top:623.28px;font-family:'Liberation Mono';font-size:19.2px;color:#cccccc;font-weight:400;font-style:normal;">:</div>
<div class="t" style="left:561.44px;top:651.78px;font-family:'Liberation Mono';font-size:19.2px;color:#6e7681;font-weight:400;font-style:normal;">17</div>
<div class="t" style="left:670.92px;top:651.78px;font-family:'Liberation Mono';font-size:19.2px;color:#569cd6;font-weight:400;font-style:normal;">container_name</div>
<div class="t" style="left:832.3399999999999px;top:651.78px;font-family:'Liberation Mono';font-size:19.2px;color:#cccccc;font-weight:400;font-style:normal;">:</div>
<div class="t" style="left:855.4px;top:651.78px;font-family:'Liberation Mono';font-size:19.2px;color:#ce9178;font-weight:400;font-style:normal;">shopee_fallback</div>
<div class="t" style="left:561.44px;top:680.28px;font-family:'Liberation Mono';font-size:19.2px;color:#6e7681;font-weight:400;font-style:normal;">18</div>
<div class="t" style="left:670.92px;top:680.28px;font-family:'Liberation Mono';font-size:19.2px;color:#569cd6;font-weight:400;font-style:normal;">image</div>
<div class="t" style="left:728.5699999999999px;top:680.28px;font-family:'Liberation Mono';font-size:19.2px;color:#cccccc;font-weight:400;font-style:normal;">:</div>
<div class="t" style="left:751.63px;top:680.28px;font-family:'Liberation Mono';font-size:19.2px;color:#ce9178;font-weight:400;font-style:normal;">all_shopee_bot_web-image</div>
<div class="t" style="left:561.44px;top:708.78px;font-family:'Liberation Mono';font-size:19.2px;color:#6e7681;font-weight:400;font-style:normal;">19</div>
<div class="t" style="left:670.92px;top:708.78px;font-family:'Liberation Mono';font-size:19.2px;color:#569cd6;font-weight:400;font-style:normal;">working_dir</div>
<div class="t" style="left:797.75px;top:708.78px;font-family:'Liberation Mono';font-size:19.2px;color:#cccccc;font-weight:400;font-style:normal;">:</div>
<div class="t" style="left:820.81px;top:708.78px;font-family:'Liberation Mono';font-size:19.2px;color:#ce9178;font-weight:400;font-style:normal;">/app</div>
<div class="t" style="left:561.44px;top:737.28px;font-family:'Liberation Mono';font-size:19.2px;color:#6e7681;font-weight:400;font-style:normal;">20</div>
<div class="t" style="left:670.92px;top:737.28px;font-family:'Liberation Mono';font-size:19.2px;color:#569cd6;font-weight:400;font-style:normal;">command</div>
<div class="t" style="left:751.63px;top:737.28px;font-family:'Liberation Mono';font-size:19.2px;color:#cccccc;font-weight:400;font-style:normal;">:</div>
<div class="t" style="left:774.6899999999999px;top:737.28px;font-family:'Liberation Mono';font-size:19.2px;color:#ffd700;font-weight:400;font-style:normal;">[</div>
<div class="t" style="left:797.75px;top:737.28px;font-family:'Liberation Mono';font-size:19.2px;color:#ce9178;font-weight:400;font-style:normal;">"python"</div>
<div class="t" style="left:889.99px;top:737.28px;font-family:'Liberation Mono';font-size:19.2px;color:#cccccc;font-weight:400;font-style:normal;">,</div>
<div class="t" style="left:913.05px;top:737.28px;font-family:'Liberation Mono';font-size:19.2px;color:#ce9178;font-weight:400;font-style:normal;">"all_shopee_polling.py"</div>
<div class="t" style="left:1189.77px;top:737.28px;font-family:'Liberation Mono';font-size:19.2px;color:#ffd700;font-weight:400;font-style:normal;">]</div>
<div class="t" style="left:561.44px;top:765.78px;font-family:'Liberation Mono';font-size:19.2px;color:#6e7681;font-weight:400;font-style:normal;">21</div>
<div class="t" style="left:670.92px;top:765.78px;font-family:'Liberation Mono';font-size:19.2px;color:#569cd6;font-weight:400;font-style:normal;">volumes</div>
<div class="t" style="left:751.63px;top:765.78px;font-family:'Liberation Mono';font-size:19.2px;color:#cccccc;font-weight:400;font-style:normal;">:</div>
<div class="t" style="left:561.44px;top:794.28px;font-family:'Liberation Mono';font-size:19.2px;color:#6e7681;font-weight:400;font-style:normal;">22</div>
<div class="t" style="left:693.9799999999999px;top:794.28px;font-family:'Liberation Mono';font-size:19.2px;color:#cccccc;font-weight:400;font-style:normal;">-</div>
<div class="t" style="left:717.04px;top:794.28px;font-family:'Liberation Mono';font-size:19.2px;color:#ce9178;font-weight:400;font-style:normal;">.:/app</div>
<div class="t" style="left:561.44px;top:822.78px;font-family:'Liberation Mono';font-size:19.2px;color:#6e7681;font-weight:400;font-style:normal;">23</div>
<div class="t" style="left:670.92px;top:822.78px;font-family:'Liberation Mono';font-size:19.2px;color:#569cd6;font-weight:400;font-style:normal;">restart</div>
<div class="t" style="left:751.63px;top:822.78px;font-family:'Liberation Mono';font-size:19.2px;color:#cccccc;font-weight:400;font-style:normal;">:</div>
<div class="t" style="left:774.6899999999999px;top:822.78px;font-family:'Liberation Mono';font-size:19.2px;color:#ce9178;font-weight:400;font-style:normal;">always</div>
<div class="a" style="left:751.63px;top:700.8px;width:276.71999999999997px;height:2px;background:#ce9178;"></div>
<div class="a" style="left:624.0px;top:170.0px;width:1.6px;height:28.5px;background:#707070;"></div>
<div class="a" style="left:624.0px;top:222.3px;width:1.6px;height:370.49999999999994px;background:#707070;"></div>
<div class="a" style="left:624.0px;top:616.5999999999999px;width:1.6px;height:228.0px;background:#707070;"></div>
<div class="a" style="left:647.06px;top:250.8px;width:1.6px;height:284.99999999999994px;background:#404040;"></div>
<div class="a" style="left:670.12px;top:421.8px;width:1.6px;height:28.5px;background:#404040;"></div>
<div class="a" style="left:670.12px;top:478.8px;width:1.6px;height:28.5px;background:#404040;"></div>
<div class="a" style="left:647.06px;top:645.0999999999999px;width:1.6px;height:199.5px;background:#404040;"></div>
<div class="a" style="left:670.12px;top:787.5999999999999px;width:1.6px;height:28.5px;background:#404040;"></div>
<div class="t" style="left:552.1px;top:864.06px;font-family:'Liberation Sans';font-size:17px;color:#9d9d9d;font-weight:400;font-style:normal;transform:scaleX(0.8500);">PROBLEMS</div>
<div class="t" style="left:668.9px;top:864.06px;font-family:'Liberation Sans';font-size:17px;color:#9d9d9d;font-weight:400;font-style:normal;transform:scaleX(0.8865);">PYTHON</div>
<div class="t" style="left:768.9px;top:864.06px;font-family:'Liberation Sans';font-size:17px;color:#9d9d9d;font-weight:400;font-style:normal;transform:scaleX(0.8671);">OUTPUT</div>
<div class="t" style="left:866px;top:864.06px;font-family:'Liberation Sans';font-size:17px;color:#9d9d9d;font-weight:400;font-style:normal;transform:scaleX(0.8610);">DEBUG CONSOLE</div>
<div class="t" style="left:1030.2px;top:864.06px;font-family:'Liberation Sans';font-size:17px;color:#e7e7e7;font-weight:400;font-style:normal;transform:scaleX(0.8923);">TERMINAL</div>
<div class="t" style="left:1143.4px;top:864.06px;font-family:'Liberation Sans';font-size:17px;color:#9d9d9d;font-weight:400;font-style:normal;transform:scaleX(0.8137);">PORTS</div>
<div class="a" style="left:1026.6px;top:886.5px;width:83.2px;height:1.6px;background:#0078d4;"></div>
<svg class="a" style="left:1563px;top:860px" width="24" height="24" viewBox="0 0 24 24" ><rect x="1.5" y="1.5" width="21" height="21" rx="3.5" stroke="#cccccc" stroke-width="1.6" fill="none"/><path d="M1.5 6.5 H22.5" stroke="#cccccc" stroke-width="1.6"/></svg>
<div class="t" style="left:1567.5px;top:872.13px;font-family:'Liberation Sans';font-size:9px;color:#cccccc;font-weight:700;font-style:normal;transform:scaleX(1.1670);">C:\</div>
<div class="t" style="left:1593.2px;top:863.66px;font-family:'Liberation Sans';font-size:18px;color:#cccccc;font-weight:400;font-style:normal;transform:scaleX(0.9116);">cmd</div>
<svg class="a" style="left:1639px;top:860px" width="24" height="24" viewBox="0 0 24 24" ><path d="M11.5 2 V21.5 M1.5 11.7 H21.5" stroke="#cccccc" stroke-width="1.6"/></svg>
<svg class="a" style="left:1668px;top:866px" width="15" height="12" viewBox="0 0 15 12" ><path d="M1.5 2.5 L7.5 8.5 L13.5 2.5" stroke="#cccccc" stroke-width="1.5" fill="none"/></svg>
<svg class="a" style="left:1698px;top:860px" width="24" height="24" viewBox="0 0 24 24" ><rect x="1.3" y="1.5" width="21" height="21" rx="3.5" stroke="#cccccc" stroke-width="1.6" fill="none"/><path d="M11.8 1.5 V22.5" stroke="#cccccc" stroke-width="1.6"/></svg>
<svg class="a" style="left:1738px;top:859px" width="22" height="26" viewBox="0 0 22 26" ><path d="M1.5 5.5 H20.5 M7 5.5 V3.5 Q7 1.5 9 1.5 H13 Q15 1.5 15 3.5 V5.5 M3.5 5.5 L5 21.5 Q5.2 23.5 7.2 23.5 H14.8 Q16.8 23.5 17 21.5 L18.5 5.5 M9 9 V19.5 M13 9 V19.5" stroke="#cccccc" stroke-width="1.6" fill="none" stroke-linejoin="round"/></svg>
<svg class="a" style="left:1780px;top:870px" width="4" height="4" viewBox="0 0 4 4" ><circle cx="2" cy="2" r="1.8" fill="#cccccc"/></svg>
<svg class="a" style="left:1786px;top:870px" width="4" height="4" viewBox="0 0 4 4" ><circle cx="2" cy="2" r="1.8" fill="#cccccc"/></svg>
<svg class="a" style="left:1792px;top:870px" width="4" height="4" viewBox="0 0 4 4" ><circle cx="2" cy="2" r="1.8" fill="#cccccc"/></svg>
<div class="a" style="left:1817px;top:860px;width:1.2px;height:24px;background:#4a4a4a;"></div>
<svg class="a" style="left:1836px;top:861px" width="21" height="20" viewBox="0 0 21 20" ><path d="M1 6 V3 Q1 1 3 1 H6 M14.5 1 H17.5 Q19.5 1 19.5 3 V6 M19.5 13.5 V16.5 Q19.5 18.5 17.5 18.5 H14.5 M6 18.5 H3 Q1 18.5 1 16.5 V13.5" stroke="#cccccc" stroke-width="1.6" fill="none"/></svg>
<svg class="a" style="left:1877px;top:863px" width="17" height="16" viewBox="0 0 17 16" ><path d="M1.5 1 L15.5 15 M15.5 1 L1.5 15" stroke="#cccccc" stroke-width="1.6"/></svg>
<div class="t" style="left:552.1px;top:929.95px;font-family:'Liberation Mono';font-size:18.33px;color:#cccccc;font-weight:400;font-style:normal;">C:\Users\windo\OneDrive\Documents\Shopee Bot\all_shopee_bot_web&gt;</div>
<div class="a" style="left:1256px;top:923px;width:11px;height:26.5px;border:1.5px solid #d0d0d0"></div>
<div class="a" style="left:1899px;top:897px;width:1px;height:79px;background:#0c0c16;"></div>
<div class="a" style="left:1899px;top:897px;width:17px;height:1px;background:#0c0c16;"></div>
<div class="a" style="left:1899px;top:138px;width:1px;height:707px;background:#141414;"></div>
<div class="a" style="left:1900px;top:355.3px;width:17px;height:3px;background:#8f8f8f;"></div>
<div class="a" style="left:1906px;top:355.3px;width:7px;height:9.2px;background:#8f8f8f;"></div>
<svg class="a" style="left:0px;top:970px" width="40" height="33" viewBox="0 0 40 33" ><path d="M16.2 18.3 L22.5 24.6 L16.2 31 M31.7 12 L24.8 18.7 L31.7 25.4" stroke="#cccccc" stroke-width="1.6" fill="none"/></svg>
<svg class="a" style="left:60px;top:980px" width="24" height="24" viewBox="0 0 24 24" ><circle cx="11.8" cy="11.5" r="10" stroke="#cccccc" stroke-width="1.6" fill="none"/><path d="M7.5 7.2 L16.1 15.8 M16.1 7.2 L7.5 15.8" stroke="#cccccc" stroke-width="1.6"/></svg>
<div class="t" style="left:88.8px;top:983.60px;font-family:'Liberation Serif';font-size:18px;color:#cccccc;font-weight:400;font-style:normal;transform:scaleX(1.0444);">0</div>
<svg class="a" style="left:104px;top:981px" width="23" height="21" viewBox="0 0 23 21" ><path d="M11.5 1.5 L21.5 19.3 H1.5 Z" stroke="#cccccc" stroke-width="1.6" fill="none" stroke-linejoin="round"/><path d="M11.5 7.5 V13.5" stroke="#cccccc" stroke-width="1.7"/><circle cx="11.5" cy="16.2" r="1" fill="#cccccc"/></svg>
<div class="t" style="left:132.7px;top:983.60px;font-family:'Liberation Serif';font-size:18px;color:#cccccc;font-weight:400;font-style:normal;transform:scaleX(1.0222);">0</div>
<div class="t" style="left:1090.4px;top:983.96px;font-family:'Liberation Sans';font-size:18px;color:#cccccc;font-weight:400;font-style:normal;transform:scaleX(0.9591);">Ln 25, Col 34 (7 selected)</div>
<div class="t" style="left:1311.8px;top:983.96px;font-family:'Liberation Sans';font-size:18px;color:#cccccc;font-weight:400;font-style:normal;transform:scaleX(0.9044);">Spaces: 2</div>
<div class="t" style="left:1409.7px;top:983.96px;font-family:'Liberation Sans';font-size:18px;color:#cccccc;font-weight:400;font-style:normal;transform:scaleX(0.9040);">UTF-8</div>
<div class="t" style="left:1480.4px;top:983.96px;font-family:'Liberation Sans';font-size:18px;color:#cccccc;font-weight:400;font-style:normal;transform:scaleX(0.8382);">CRLF</div>
<div class="t" style="left:1576.5px;top:983.96px;font-family:'Liberation Sans';font-size:18px;color:#cccccc;font-weight:400;font-style:normal;transform:scaleX(0.9762);">Compose</div>
<div class="t" style="left:1753.5px;top:983.96px;font-family:'Liberation Sans';font-size:18px;color:#cccccc;font-weight:400;font-style:normal;transform:scaleX(0.9382);">Go Live</div>
<div class="t" style="left:1545.2px;top:983.96px;font-family:'Liberation Sans';font-size:18px;color:#cccccc;font-weight:400;font-style:normal;transform:scaleX(1.1865);">{ }</div>
<svg class="a" style="left:1675px;top:981px" width="27" height="22" viewBox="0 0 27 22" ><rect x="4.2" y="1.6" width="8" height="8" rx="3" stroke="#cccccc" stroke-width="2.6" fill="none"/>
<rect x="13.8" y="1.6" width="8" height="8" rx="3" stroke="#cccccc" stroke-width="2.6" fill="none"/>
<path d="M3 9 Q0.8 10.5 0.8 13.5 V15 Q0.8 18 4 19.5 Q8 21.2 13 21.2 Q18 21.2 22 19.5 Q25.2 18 25.2 15 V13.5 Q25.2 10.5 23 9 Q21 11.8 17.5 11.8 Q14.5 11.8 13 10.2 Q11.5 11.8 8.5 11.8 Q5 11.8 3 9 Z" fill="#cccccc"/>
<rect x="8.6" y="13" width="2.6" height="5" rx="1.2" fill="#181818"/><rect x="14.8" y="13" width="2.6" height="5" rx="1.2" fill="#181818"/></svg>
<svg class="a" style="left:1723px;top:982px" width="27" height="20" viewBox="0 0 27 20" ><path d="M6 2.5 Q1.5 9.5 6 16.5 M21 2.5 Q25.5 9.5 21 16.5 M9.5 5.5 Q7 9.5 9.5 13.5 M17.5 5.5 Q20 9.5 17.5 13.5" stroke="#cccccc" stroke-width="1.6" fill="none" stroke-linecap="round"/><circle cx="13.5" cy="9.5" r="1.9" fill="#cccccc"/></svg>
<div class="a" style="left:1824px;top:977px;width:48px;height:26px;background:#7a6400;"></div>
<svg class="a" style="left:1833px;top:980px" width="30" height="24" viewBox="0 0 30 24" ><path d="M15 1.2 Q15.8 11.6 27 12.4 Q15.8 13.2 15 24 Q14.2 13.2 3 12.4 Q14.2 11.6 15 1.2 Z" fill="#ffffff"/>
<path d="M3.8 3 L24.7 23.5" stroke="#7a6400" stroke-width="4.8"/>
<path d="M3.8 3 L24.7 23.5" stroke="#ffffff" stroke-width="2.4"/></svg>
<svg class="a" style="left:1884.5px;top:979.5px" width="26" height="24" viewBox="0 0 26 24" ><path d="M11 3.3 Q5 3.8 5 11 V16.8 L2.8 20 H19.7 L17.5 16.8 V13.5" stroke="#cccccc" stroke-width="1.6" fill="none" stroke-linejoin="round"/><path d="M9 21 Q9 23.5 11.3 23.5 Q13.5 23.5 13.5 21" stroke="#cccccc" stroke-width="1.4" fill="none"/><circle cx="17.6" cy="6" r="4.9" fill="#cccccc"/></svg>
<svg class="a" style="left:0px;top:0px" width="1918" height="1003" viewBox="0 0 1918 1003" style="left:0;top:0;pointer-events:none"><rect x="1822.64" y="186.20" width="6.86" height="2.2" fill="#3d79c2"/><rect x="1795.20" y="138.50" width="7.84" height="1.3" fill="#569cd6" opacity="0.42"/><rect x="1803.04" y="138.50" width="0.98" height="1.3" fill="#cccccc" opacity="0.42"/><rect x="1797.16" y="140.50" width="0.98" height="1.3" fill="#6a9955" opacity="0.42"/><rect x="1799.12" y="140.50" width="2.94" height="1.3" fill="#6a9955" opacity="0.42"/><rect x="1803.04" y="140.50" width="5.88" height="1.3" fill="#6a9955" opacity="0.42"/><rect x="1809.90" y="140.50" width="6.86" height="1.3" fill="#6a9955" opacity="0.42"/><rect x="1817.74" y="140.50" width="7.84" height="1.3" fill="#6a9955" opacity="0.42"/><rect x="1826.56" y="140.50" width="6.86" height="1.3" fill="#6a9955" opacity="0.42"/><rect x="1834.40" y="140.50" width="7.84" height="1.3" fill="#6a9955" opacity="0.42"/><rect x="1797.16" y="142.50" width="13.72" height="1.3" fill="#569cd6" opacity="0.42"/><rect x="1810.88" y="142.50" width="0.98" height="1.3" fill="#cccccc" opacity="0.42"/><rect x="1799.12" y="144.50" width="13.72" height="1.3" fill="#569cd6" opacity="0.42"/><rect x="1812.84" y="144.50" width="0.98" height="1.3" fill="#cccccc" opacity="0.42"/><rect x="1814.80" y="144.50" width="13.72" height="1.3" fill="#ce9178" opacity="0.42"/><rect x="1799.12" y="146.50" width="4.90" height="1.3" fill="#569cd6" opacity="0.42"/><rect x="1804.02" y="146.50" width="0.98" height="1.3" fill="#cccccc" opacity="0.42"/><rect x="1805.98" y="146.50" width="0.98" height="1.3" fill="#ce9178" opacity="0.42"/><rect x="1799.12" y="148.50" width="4.90" height="1.3" fill="#569cd6" opacity="0.42"/><rect x="1804.02" y="148.50" width="0.98" height="1.3" fill="#cccccc" opacity="0.42"/><rect x="1805.98" y="148.50" width="23.52" height="1.3" fill="#ce9178" opacity="0.42"/><rect x="1799.12" y="150.50" width="10.78" height="1.3" fill="#569cd6" opacity="0.42"/><rect x="1809.90" y="150.50" width="0.98" height="1.3" fill="#cccccc" opacity="0.42"/><rect x="1811.86" y="150.50" width="3.92" height="1.3" fill="#ce9178" opacity="0.42"/><rect x="1799.12" y="152.50" width="6.86" height="1.3" fill="#569cd6" opacity="0.42"/><rect x="1805.98" y="152.50" width="0.98" height="1.3" fill="#cccccc" opacity="0.42"/><rect x="1807.94" y="152.50" width="0.98" height="1.3" fill="#ffd700" opacity="0.42"/><rect x="1809.90" y="152.50" width="8.82" height="1.3" fill="#ce9178" opacity="0.42"/><rect x="1819.70" y="152.50" width="15.68" height="1.3" fill="#ce9178" opacity="0.42"/><rect x="1836.36" y="152.50" width="10.78" height="1.3" fill="#ce9178" opacity="0.42"/><rect x="1848.12" y="152.50" width="0.98" height="1.3" fill="#ffd700" opacity="0.42"/><rect x="1799.12" y="154.50" width="6.86" height="1.3" fill="#569cd6" opacity="0.42"/><rect x="1805.98" y="154.50" width="0.98" height="1.3" fill="#cccccc" opacity="0.42"/><rect x="1801.08" y="156.50" width="0.98" height="1.3" fill="#cccccc" opacity="0.42"/><rect x="1803.04" y="156.50" width="5.88" height="1.3" fill="#ce9178" opacity="0.42"/><rect x="1799.12" y="158.50" width="4.90" height="1.3" fill="#569cd6" opacity="0.42"/><rect x="1804.02" y="158.50" width="0.98" height="1.3" fill="#cccccc" opacity="0.42"/><rect x="1801.08" y="160.50" width="0.98" height="1.3" fill="#cccccc" opacity="0.42"/><rect x="1803.04" y="160.50" width="10.78" height="1.3" fill="#ce9178" opacity="0.42"/><rect x="1799.12" y="162.50" width="6.86" height="1.3" fill="#569cd6" opacity="0.42"/><rect x="1805.98" y="162.50" width="0.98" height="1.3" fill="#cccccc" opacity="0.42"/><rect x="1807.94" y="162.50" width="5.88" height="1.3" fill="#ce9178" opacity="0.42"/><rect x="1797.16" y="166.50" width="0.98" height="1.3" fill="#6a9955" opacity="0.42"/><rect x="1799.12" y="166.50" width="2.94" height="1.3" fill="#6a9955" opacity="0.42"/><rect x="1803.04" y="166.50" width="5.88" height="1.3" fill="#6a9955" opacity="0.42"/><rect x="1809.90" y="166.50" width="7.84" height="1.3" fill="#6a9955" opacity="0.42"/><rect x="1818.72" y="166.50" width="6.86" height="1.3" fill="#6a9955" opacity="0.42"/><rect x="1826.56" y="166.50" width="8.82" height="1.3" fill="#6a9955" opacity="0.42"/><rect x="1836.36" y="166.50" width="7.84" height="1.3" fill="#6a9955" opacity="0.42"/><rect x="1797.16" y="168.50" width="14.70" height="1.3" fill="#569cd6" opacity="0.42"/><rect x="1811.86" y="168.50" width="0.98" height="1.3" fill="#cccccc" opacity="0.42"/><rect x="1799.12" y="170.50" width="13.72" height="1.3" fill="#569cd6" opacity="0.42"/><rect x="1812.84" y="170.50" width="0.98" height="1.3" fill="#cccccc" opacity="0.42"/><rect x="1814.80" y="170.50" width="14.70" height="1.3" fill="#ce9178" opacity="0.42"/><rect x="1799.12" y="172.50" width="4.90" height="1.3" fill="#569cd6" opacity="0.42"/><rect x="1804.02" y="172.50" width="0.98" height="1.3" fill="#cccccc" opacity="0.42"/><rect x="1805.98" y="172.50" width="23.52" height="1.3" fill="#ce9178" opacity="0.42"/><rect x="1799.12" y="174.50" width="10.78" height="1.3" fill="#569cd6" opacity="0.42"/><rect x="1809.90" y="174.50" width="0.98" height="1.3" fill="#cccccc" opacity="0.42"/><rect x="1811.86" y="174.50" width="3.92" height="1.3" fill="#ce9178" opacity="0.42"/><rect x="1799.12" y="176.50" width="6.86" height="1.3" fill="#569cd6" opacity="0.42"/><rect x="1805.98" y="176.50" width="0.98" height="1.3" fill="#cccccc" opacity="0.42"/><rect x="1807.94" y="176.50" width="0.98" height="1.3" fill="#ffd700" opacity="0.42"/><rect x="1809.90" y="176.50" width="8.82" height="1.3" fill="#ce9178" opacity="0.42"/><rect x="1819.70" y="176.50" width="22.54" height="1.3" fill="#ce9178" opacity="0.42"/><rect x="1843.22" y="176.50" width="0.98" height="1.3" fill="#ffd700" opacity="0.42"/><rect x="1799.12" y="178.50" width="6.86" height="1.3" fill="#569cd6" opacity="0.42"/><rect x="1805.98" y="178.50" width="0.98" height="1.3" fill="#cccccc" opacity="0.42"/><rect x="1801.08" y="180.50" width="0.98" height="1.3" fill="#cccccc" opacity="0.42"/><rect x="1803.04" y="180.50" width="5.88" height="1.3" fill="#ce9178" opacity="0.42"/><rect x="1799.12" y="182.50" width="6.86" height="1.3" fill="#569cd6" opacity="0.42"/><rect x="1805.98" y="182.50" width="0.98" height="1.3" fill="#cccccc" opacity="0.42"/><rect x="1807.94" y="182.50" width="5.88" height="1.3" fill="#ce9178" opacity="0.42"/><rect x="1797.16" y="186.50" width="0.98" height="1.3" fill="#6a9955" opacity="0.42"/><rect x="1799.12" y="186.50" width="1.96" height="1.3" fill="#6a9955" opacity="0.42"/><rect x="1802.06" y="186.50" width="5.88" height="1.3" fill="#6a9955" opacity="0.42"/><rect x="1808.92" y="186.50" width="3.92" height="1.3" fill="#6a9955" opacity="0.42"/><rect x="1813.82" y="186.50" width="2.94" height="1.3" fill="#6a9955" opacity="0.42"/><rect x="1817.74" y="186.50" width="5.88" height="1.3" fill="#6a9955" opacity="0.42"/><rect x="1797.16" y="188.50" width="18.62" height="1.3" fill="#569cd6" opacity="0.42"/><rect x="1799.12" y="190.50" width="13.72" height="1.3" fill="#569cd6" opacity="0.42"/><rect x="1812.84" y="190.50" width="0.98" height="1.3" fill="#cccccc" opacity="0.42"/><rect x="1814.80" y="190.50" width="14.70" height="1.3" fill="#ce9178" opacity="0.42"/><rect x="1799.12" y="192.50" width="4.90" height="1.3" fill="#569cd6" opacity="0.42"/><rect x="1804.02" y="192.50" width="0.98" height="1.3" fill="#cccccc" opacity="0.42"/><rect x="1805.98" y="192.50" width="23.52" height="1.3" fill="#ce9178" opacity="0.42"/><rect x="1799.12" y="194.50" width="10.78" height="1.3" fill="#569cd6" opacity="0.42"/><rect x="1809.90" y="194.50" width="0.98" height="1.3" fill="#cccccc" opacity="0.42"/><rect x="1811.86" y="194.50" width="3.92" height="1.3" fill="#ce9178" opacity="0.42"/><rect x="1799.12" y="196.50" width="6.86" height="1.3" fill="#569cd6" opacity="0.42"/><rect x="1805.98" y="196.50" width="0.98" height="1.3" fill="#cccccc" opacity="0.42"/><rect x="1807.94" y="196.50" width="0.98" height="1.3" fill="#ffd700" opacity="0.42"/><rect x="1809.90" y="196.50" width="8.82" height="1.3" fill="#ce9178" opacity="0.42"/><rect x="1819.70" y="196.50" width="18.62" height="1.3" fill="#ce9178" opacity="0.42"/><rect x="1839.30" y="196.50" width="0.98" height="1.3" fill="#ffd700" opacity="0.42"/><rect x="1799.12" y="198.50" width="6.86" height="1.3" fill="#569cd6" opacity="0.42"/><rect x="1805.98" y="198.50" width="0.98" height="1.3" fill="#cccccc" opacity="0.42"/><rect x="1801.08" y="200.50" width="0.98" height="1.3" fill="#cccccc" opacity="0.42"/><rect x="1803.04" y="200.50" width="5.88" height="1.3" fill="#ce9178" opacity="0.42"/><rect x="1799.12" y="202.50" width="7.84" height="1.3" fill="#569cd6" opacity="0.42"/><rect x="1806.96" y="202.50" width="0.98" height="1.3" fill="#cccccc" opacity="0.42"/><rect x="1808.92" y="202.50" width="3.92" height="1.3" fill="#ce9178" opacity="0.42"/><rect x="1799.12" y="204.50" width="6.86" height="1.3" fill="#569cd6" opacity="0.42"/><rect x="1805.98" y="204.50" width="0.98" height="1.3" fill="#cccccc" opacity="0.42"/><rect x="1807.94" y="204.50" width="5.88" height="1.3" fill="#ce9178" opacity="0.42"/><rect x="1797.16" y="208.50" width="0.98" height="1.3" fill="#6a9955" opacity="0.42"/><rect x="1799.12" y="208.50" width="1.96" height="1.3" fill="#6a9955" opacity="0.42"/><rect x="1802.06" y="208.50" width="5.88" height="1.3" fill="#6a9955" opacity="0.42"/><rect x="1808.92" y="208.50" width="6.86" height="1.3" fill="#6a9955" opacity="0.42"/><rect x="1816.76" y="208.50" width="4.90" height="1.3" fill="#6a9955" opacity="0.42"/><rect x="1797.16" y="210.50" width="14.70" height="1.3" fill="#569cd6" opacity="0.42"/><rect x="1811.86" y="210.50" width="0.98" height="1.3" fill="#cccccc" opacity="0.42"/><rect x="1799.12" y="212.50" width="13.72" height="1.3" fill="#569cd6" opacity="0.42"/><rect x="1812.84" y="212.50" width="0.98" height="1.3" fill="#cccccc" opacity="0.42"/><rect x="1814.80" y="212.50" width="12.74" height="1.3" fill="#ce9178" opacity="0.42"/><rect x="1799.12" y="214.50" width="4.90" height="1.3" fill="#569cd6" opacity="0.42"/><rect x="1804.02" y="214.50" width="0.98" height="1.3" fill="#cccccc" opacity="0.42"/><rect x="1805.98" y="214.50" width="23.52" height="1.3" fill="#ce9178" opacity="0.42"/><rect x="1799.12" y="216.50" width="10.78" height="1.3" fill="#569cd6" opacity="0.42"/><rect x="1809.90" y="216.50" width="0.98" height="1.3" fill="#cccccc" opacity="0.42"/><rect x="1811.86" y="216.50" width="3.92" height="1.3" fill="#ce9178" opacity="0.42"/><rect x="1799.12" y="218.50" width="6.86" height="1.3" fill="#569cd6" opacity="0.42"/><rect x="1805.98" y="218.50" width="0.98" height="1.3" fill="#cccccc" opacity="0.42"/><rect x="1807.94" y="218.50" width="0.98" height="1.3" fill="#ffd700" opacity="0.42"/><rect x="1809.90" y="218.50" width="8.82" height="1.3" fill="#ce9178" opacity="0.42"/><rect x="1819.70" y="218.50" width="15.68" height="1.3" fill="#ce9178" opacity="0.42"/><rect x="1836.36" y="218.50" width="0.98" height="1.3" fill="#ffd700" opacity="0.42"/><rect x="1799.12" y="220.50" width="6.86" height="1.3" fill="#569cd6" opacity="0.42"/><rect x="1805.98" y="220.50" width="0.98" height="1.3" fill="#cccccc" opacity="0.42"/><rect x="1801.08" y="222.50" width="0.98" height="1.3" fill="#cccccc" opacity="0.42"/><rect x="1803.04" y="222.50" width="5.88" height="1.3" fill="#ce9178" opacity="0.42"/><rect x="1799.12" y="224.50" width="7.84" height="1.3" fill="#569cd6" opacity="0.42"/><rect x="1806.96" y="224.50" width="0.98" height="1.3" fill="#cccccc" opacity="0.42"/><rect x="1808.92" y="224.50" width="3.92" height="1.3" fill="#ce9178" opacity="0.42"/><rect x="1799.12" y="226.50" width="6.86" height="1.3" fill="#569cd6" opacity="0.42"/><rect x="1805.98" y="226.50" width="0.98" height="1.3" fill="#cccccc" opacity="0.42"/><rect x="1807.94" y="226.50" width="5.88" height="1.3" fill="#ce9178" opacity="0.42"/><rect x="1797.16" y="230.50" width="0.98" height="1.3" fill="#6a9955" opacity="0.42"/><rect x="1799.12" y="230.50" width="1.96" height="1.3" fill="#6a9955" opacity="0.42"/><rect x="1802.06" y="230.50" width="5.88" height="1.3" fill="#6a9955" opacity="0.42"/><rect x="1808.92" y="230.50" width="4.90" height="1.3" fill="#6a9955" opacity="0.42"/><rect x="1814.80" y="230.50" width="2.94" height="1.3" fill="#6a9955" opacity="0.42"/><rect x="1797.16" y="232.50" width="8.82" height="1.3" fill="#569cd6" opacity="0.42"/><rect x="1805.98" y="232.50" width="0.98" height="1.3" fill="#cccccc" opacity="0.42"/><rect x="1799.12" y="234.50" width="13.72" height="1.3" fill="#569cd6" opacity="0.42"/><rect x="1812.84" y="234.50" width="0.98" height="1.3" fill="#cccccc" opacity="0.42"/><rect x="1814.80" y="234.50" width="8.82" height="1.3" fill="#ce9178" opacity="0.42"/><rect x="1799.12" y="236.50" width="4.90" height="1.3" fill="#569cd6" opacity="0.42"/><rect x="1804.02" y="236.50" width="0.98" height="1.3" fill="#cccccc" opacity="0.42"/><rect x="1805.98" y="236.50" width="23.52" height="1.3" fill="#ce9178" opacity="0.42"/><rect x="1799.12" y="238.50" width="10.78" height="1.3" fill="#569cd6" opacity="0.42"/><rect x="1809.90" y="238.50" width="0.98" height="1.3" fill="#cccccc" opacity="0.42"/><rect x="1811.86" y="238.50" width="3.92" height="1.3" fill="#ce9178" opacity="0.42"/><rect x="1799.12" y="240.50" width="6.86" height="1.3" fill="#569cd6" opacity="0.42"/><rect x="1805.98" y="240.50" width="0.98" height="1.3" fill="#cccccc" opacity="0.42"/><rect x="1807.94" y="240.50" width="0.98" height="1.3" fill="#ffd700" opacity="0.42"/><rect x="1809.90" y="240.50" width="8.82" height="1.3" fill="#ce9178" opacity="0.42"/><rect x="1819.70" y="240.50" width="13.72" height="1.3" fill="#ce9178" opacity="0.42"/><rect x="1834.40" y="240.50" width="0.98" height="1.3" fill="#ffd700" opacity="0.42"/><rect x="1799.12" y="242.50" width="6.86" height="1.3" fill="#569cd6" opacity="0.42"/><rect x="1805.98" y="242.50" width="0.98" height="1.3" fill="#cccccc" opacity="0.42"/><rect x="1801.08" y="244.50" width="0.98" height="1.3" fill="#cccccc" opacity="0.42"/><rect x="1803.04" y="244.50" width="5.88" height="1.3" fill="#ce9178" opacity="0.42"/><rect x="1799.12" y="246.50" width="7.84" height="1.3" fill="#569cd6" opacity="0.42"/><rect x="1806.96" y="246.50" width="0.98" height="1.3" fill="#cccccc" opacity="0.42"/><rect x="1808.92" y="246.50" width="3.92" height="1.3" fill="#ce9178" opacity="0.42"/><rect x="1799.12" y="248.50" width="6.86" height="1.3" fill="#569cd6" opacity="0.42"/><rect x="1805.98" y="248.50" width="0.98" height="1.3" fill="#cccccc" opacity="0.42"/><rect x="1807.94" y="248.50" width="5.88" height="1.3" fill="#ce9178" opacity="0.42"/></svg></div></body></html>
